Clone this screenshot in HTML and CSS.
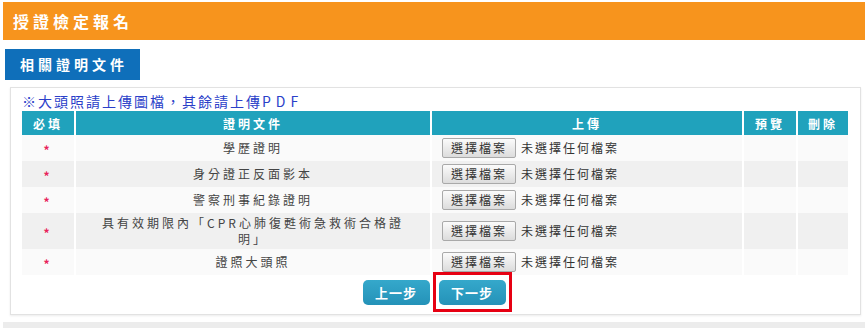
FILE: index.html
```html
<!DOCTYPE html>
<html lang="zh-Hant">
<head>
  <meta charset="UTF-8" />
  <title>授證檢定報名</title>
  <link rel="stylesheet" href="styles.css">
</head>
<body>
  <div class="page">
    <div class="title-bar">授證檢定報名</div>

    <div class="tab">相關證明文件</div>

    <section class="panel">
      <p class="notice">※大頭照請上傳圖檔，其餘請上傳<span class="latin">PDF</span></p>

      <table class="doc-table">
        <colgroup>
          <col style="width:52px">
          <col style="width:356px">
          <col style="width:312px">
          <col style="width:54px">
          <col style="width:52px">
        </colgroup>
        <thead>
          <tr>
            <th>必填</th>
            <th>證明文件</th>
            <th>上傳</th>
            <th>預覽</th>
            <th>刪除</th>
          </tr>
        </thead>
        <tbody>
          <tr>
            <td class="req">*</td>
            <td class="name">學歷證明</td>
            <td class="upload"><span class="file-btn">選擇檔案</span><span class="file-name">未選擇任何檔案</span></td>
            <td></td>
            <td></td>
          </tr>
          <tr>
            <td class="req">*</td>
            <td class="name">身分證正反面影本</td>
            <td class="upload"><span class="file-btn">選擇檔案</span><span class="file-name">未選擇任何檔案</span></td>
            <td></td>
            <td></td>
          </tr>
          <tr>
            <td class="req">*</td>
            <td class="name">警察刑事紀錄證明</td>
            <td class="upload"><span class="file-btn">選擇檔案</span><span class="file-name">未選擇任何檔案</span></td>
            <td></td>
            <td></td>
          </tr>
          <tr>
            <td class="req">*</td>
            <td class="name">具有效期限內「CPR心肺復甦術急救術合格證<br>明」</td>
            <td class="upload"><span class="file-btn">選擇檔案</span><span class="file-name">未選擇任何檔案</span></td>
            <td></td>
            <td></td>
          </tr>
          <tr>
            <td class="req">*</td>
            <td class="name">證照大頭照</td>
            <td class="upload"><span class="file-btn">選擇檔案</span><span class="file-name">未選擇任何檔案</span></td>
            <td></td>
            <td></td>
          </tr>
        </tbody>
      </table>

      <div class="actions">
        <button class="step-btn">上一步</button>
        <span class="marked"><button class="step-btn">下一步</button></span>
      </div>
    </section>

    <div class="next-panel"></div>
  </div>
</body>
</html>
```

FILE: styles.css
```css
body {
  margin: 0;
  font-family: 'Noto Sans CJK TC', 'Noto Sans', sans-serif;
  background-color: #fff;
  color: #444;
}

.page {
  padding: 2px 0 0 3px;
}

.title-bar {
  height: 38px;
  line-height: 38px;
  background-color: #f7941d;
  color: #fff;
  font-size: 16px;
  font-weight: bold;
  letter-spacing: 4px;
  padding-left: 10px;
}

.tab {
  display: inline-block;
  margin: 9px 0 0 2px;
  height: 31px;
  line-height: 31px;
  padding: 0 12px 0 15px;
  background-color: #0f6fba;
  color: #fff;
  font-size: 14px;
  font-weight: bold;
  letter-spacing: 4px;
}

.panel {
  margin: 7px 4px 0 7px;
  border: 1px solid #e2e2e2;
  box-shadow: 0 1px 2px rgba(0,0,0,0.08);
  padding: 3px 12px 9px 11px;
}

.notice {
  margin: 0;
  height: 20px;
  line-height: 21px;
  font-size: 14px;
  letter-spacing: 2px;
  color: #2b3fc9;
}

.notice .latin {
  letter-spacing: 5px;
}

.doc-table {
  width: 826px;
  border-collapse: separate;
  border-spacing: 0;
  table-layout: fixed;
  font-size: 12px;
  letter-spacing: 3px;
}

.doc-table th {
  height: 24px;
  background-color: #20a2bc;
  color: #fff;
  font-weight: bold;
  text-align: center;
  padding: 0;
}

.doc-table th + th,
.doc-table td + td {
  border-left: 2px solid #fff;
}

.doc-table td {
  height: 22px;
  padding: 2px 8px;
  line-height: 16px;
  text-align: center;
  vertical-align: middle;
}

.doc-table tbody tr:nth-child(odd) td {
  background-color: #fafafa;
}

.doc-table tbody tr:nth-child(even) td {
  background-color: #f0f0f0;
}

.doc-table td.req {
  color: #e8245a;
  font-weight: bold;
  padding-top: 4px;
  padding-bottom: 0;
}

.doc-table td.upload {
  text-align: left;
  padding-left: 10px;
  white-space: nowrap;
}

.file-btn {
  display: inline-block;
  box-sizing: border-box;
  width: 74px;
  height: 20px;
  line-height: 18px;
  border: 1px solid #a9a9a9;
  border-radius: 2px;
  background: linear-gradient(#fbfbfb, #dcdcdc);
  text-align: center;
  letter-spacing: 2px;
  color: #333;
  vertical-align: middle;
}

.file-name {
  margin-left: 5px;
  letter-spacing: 2px;
  color: #333;
  vertical-align: middle;
}

.actions {
  display: flex;
  justify-content: center;
  gap: 9px;
  margin-top: 5px;
  padding-right: 2px;
}

.step-btn {
  display: block;
  width: 67px;
  height: 25px;
  border: none;
  border-radius: 5px;
  background: linear-gradient(#35a8cb, #2492b8);
  color: #fff;
  font-family: inherit;
  font-size: 13px;
  font-weight: bold;
  letter-spacing: 1px;
  padding: 0;
}

/* red highlight frame drawn over the "next" button */
.marked {
  position: relative;
}

.marked::after {
  content: "";
  position: absolute;
  top: -8px;
  bottom: -7px;
  left: -6px;
  right: -6px;
  border: 3px solid #e60012;
}

.next-panel {
  margin-top: 7px;
  height: 10px;
  background-color: #ececec;
}
```
